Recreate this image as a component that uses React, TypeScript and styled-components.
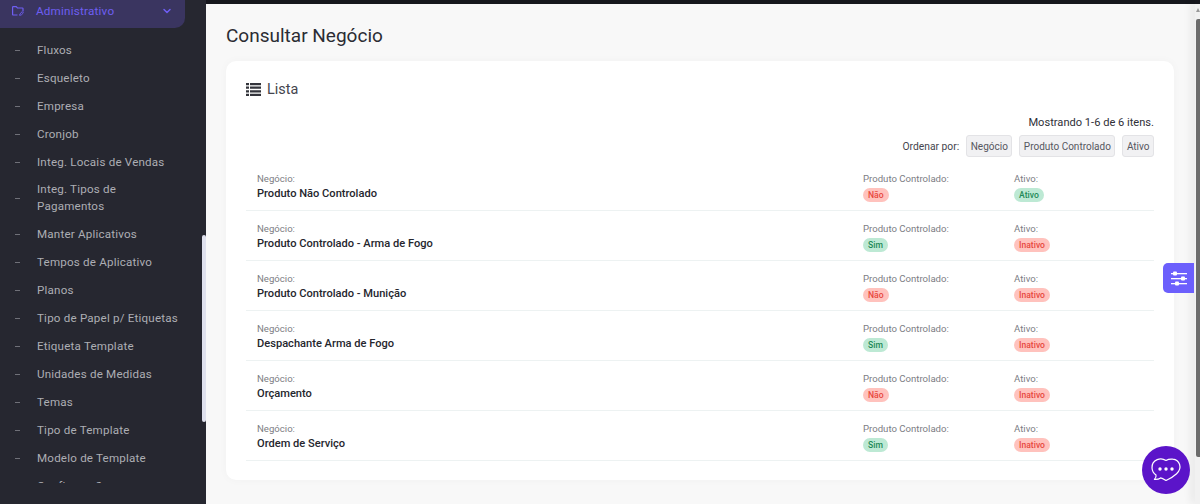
import React from 'react';
import styled, { createGlobalStyle } from 'styled-components';
import { ChevronDown } from 'lucide-react';

const GlobalStyle = createGlobalStyle`
  html, body {
    margin: 0;
    height: 504px;
    overflow: hidden;
    background: #f8f8f8;
    font-family: Roboto, "Liberation Sans", sans-serif;
  }
`;

const Layout = styled.div`
  display: flex;
  width: 1200px;
  height: 504px;
  overflow: hidden;
`;

const Sidebar = styled.aside`
  position: relative;
  flex: none;
  width: 206px;
  height: 504px;
  background: #262730;
`;

const SideClip = styled.div`
  height: 483px;
  overflow: hidden;
`;

const ActiveItem = styled.div`
  display: flex;
  align-items: center;
  width: 185px;
  height: 28px;
  box-sizing: border-box;
  padding: 0 12px 6px 12px;
  border-radius: 0 0 10px 0;
  background: #3a3560;
  color: #6e5ef2;
  font-size: 11.7px;
  letter-spacing: 0.2px;
`;

const ActiveLabel = styled.span`
  flex: 1;
  margin-left: 12px;
`;

const SideList = styled.ul`
  margin: 0;
  padding: 8px 0 0;
  list-style: none;
`;

const SideItem = styled.li`
  display: flex;
  align-items: center;
  box-sizing: border-box;
  min-height: 28px;
  padding: 5px 24px 5px 15px;
  color: #adaeb4;
  font-size: 11.6px;
  line-height: 17px;
  letter-spacing: 0.2px;

  &::before {
    content: '';
    flex: none;
    width: 5px;
    height: 1px;
    margin-right: 17px;
    background: #6f7078;
  }
`;

const SideThumb = styled.div`
  position: absolute;
  top: 235px;
  right: 0;
  width: 4px;
  height: 187px;
  border-radius: 2px;
  background: #dfe1ee;
`;

const Main = styled.main`
  flex: 1;
  min-width: 0;
  display: flex;
  flex-direction: column;
  border-top: 4px solid #16171d;
`;

const Content = styled.div`
  flex: 1;
  padding: 20px 21px 0 20px;
`;

const Title = styled.h1`
  margin: 0 0 13px;
  height: 24px;
  color: #2b2c33;
  font-size: 19px;
  font-weight: 400;
  line-height: 24px;
`;

const Card = styled.section`
  height: 419px;
  box-sizing: border-box;
  padding: 19px 20px 0;
  background: #fff;
  border-radius: 10px;
  box-shadow: 0 0 10px rgba(30, 30, 60, 0.03);
`;

const CardHead = styled.div`
  display: flex;
  align-items: center;
  gap: 6px;
  height: 18px;
  color: #44454d;
  font-size: 14.4px;
`;

const ListIcon = styled.svg`
  width: 15px;
  height: 13px;
  fill: #33343b;
`;

const Summary = styled.div`
  margin-top: 18px;
  text-align: right;
  color: #2f3038;
  font-size: 11.1px;
  line-height: 14px;
`;

const SortBar = styled.div`
  display: flex;
  justify-content: flex-end;
  align-items: center;
  gap: 7px;
  margin-top: 5px;
  color: #44454d;
  font-size: 10.3px;
`;

const SortButton = styled.button`
  height: 22px;
  padding: 0 3.5px;
  background: #f1f1f3;
  border: 1px solid #e3e3e6;
  border-radius: 3px;
  color: #56575f;
  font-family: inherit;
  font-size: 10px;
`;

const Rows = styled.div`
  margin-top: 3.6px;
`;

const Row = styled.div`
  display: grid;
  grid-template-columns: 606px 151px 1fr;
  box-sizing: border-box;
  height: 50px;
  padding: 11px 11px 0;
  border-bottom: 1px solid #edf2f2;
`;

const Field = styled.div`
  display: flex;
  flex-direction: column;
  align-items: flex-start;
`;

const FieldLabel = styled.span`
  color: #7c7d84;
  font-size: 9.6px;
  line-height: 14px;
`;

const FieldValue = styled.strong`
  color: #25262d;
  font-size: 11.1px;
  font-weight: 500;
  line-height: 16px;
`;

const Badge = styled.span<{ $ok: boolean }>`
  margin-top: 2px;
  padding: 0 5px;
  border-radius: 7px;
  background: ${({ $ok }) => ($ok ? '#bde9d4' : '#ffc2bd')};
  color: ${({ $ok }) => ($ok ? '#1f8a57' : '#e8483e')};
  font-size: 8.6px;
  font-weight: 500;
  line-height: 14px;
`;

const PageScroll = styled.div`
  flex: none;
  position: relative;
  width: 5px;
  background: #f1f1f1;
  border-top: 4px solid #16171d;
  box-shadow: -3px 0 9px rgba(0, 0, 0, 0.1);
`;

const ScrollArrow = styled.div`
  position: absolute;
  top: 4px;
  left: 1px;
  width: 0;
  height: 0;
  border-left: 2px solid transparent;
  border-right: 2px solid transparent;
  border-bottom: 4px solid #9a9a9a;
`;

const ScrollThumb = styled.div`
  position: absolute;
  top: 15px;
  left: 1px;
  width: 4px;
  height: 438px;
  border-radius: 2px 0 0 2px;
  background: #6b6b6b;
`;

const FilterTab = styled.button`
  position: absolute;
  top: 263px;
  left: 1163px;
  display: flex;
  align-items: center;
  justify-content: center;
  width: 31px;
  height: 30px;
  padding: 0;
  border: 0;
  border-radius: 5px 0 0 5px;
  background: #6c5ffc;
`;

const ChatBubble = styled.button`
  position: absolute;
  top: 446px;
  left: 1142px;
  display: flex;
  align-items: center;
  justify-content: center;
  width: 48px;
  height: 48px;
  padding: 0;
  border: 0;
  border-radius: 50%;
  background: #5b14c9;
`;

const menu = [
  'Fluxos',
  'Esqueleto',
  'Empresa',
  'Cronjob',
  'Integ. Locais de Vendas',
  'Integ. Tipos de Pagamentos',
  'Manter Aplicativos',
  'Tempos de Aplicativo',
  'Planos',
  'Tipo de Papel p/ Etiquetas',
  'Etiqueta Template',
  'Unidades de Medidas',
  'Temas',
  'Tipo de Template',
  'Modelo de Template',
  'Configurações',
];

const rows = [
  { name: 'Produto Não Controlado', controlled: false, active: true },
  { name: 'Produto Controlado - Arma de Fogo', controlled: true, active: false },
  { name: 'Produto Controlado - Munição', controlled: false, active: false },
  { name: 'Despachante Arma de Fogo', controlled: true, active: false },
  { name: 'Orçamento', controlled: false, active: false },
  { name: 'Ordem de Serviço', controlled: true, active: false },
];

export default function App() {
  return (
    <Layout>
      <GlobalStyle />
      <Sidebar>
        <SideClip>
          <ActiveItem>
            <svg width="12" height="10" viewBox="0 0 12 10" fill="none" stroke="currentColor" strokeWidth="1.2">
              <path d="M5.500 9H1.200a.6.6 0 0 1-.6-.6V1.200a.6.6 0 0 1 .6-.6h3l1.200 1.400h5a.6.6 0 0 1 .6.6v3" />
              <path d="M7.500 9.300 8 7.800l2.200-2.100 1.200 1.200-2.200 2.100Z" strokeWidth="0.9" />
            </svg>
            <ActiveLabel>Administrativo</ActiveLabel>
            <ChevronDown size={12} strokeWidth={3} />
          </ActiveItem>
          <SideList>
            {menu.map((item) => (
              <SideItem key={item}>{item}</SideItem>
            ))}
          </SideList>
        </SideClip>
        <SideThumb />
      </Sidebar>
      <Main>
        <Content>
          <Title>Consultar Negócio</Title>
          <Card>
            <CardHead>
              <ListIcon viewBox="0 0 15 13">
                <path d="M0 0h3v2.200H0zM4 0h11v2.200H4zM0 3.600h3v2.200H0zM4 3.600h11v2.200H4zM0 7.200h3v2.200H0zM4 7.200h11v2.200H4zM0 10.800h3V13H0zM4 10.800h11V13H4z" />
              </ListIcon>
              Lista
            </CardHead>
            <Summary>Mostrando 1-6 de 6 itens.</Summary>
            <SortBar>
              <span>Ordenar por:</span>
              <SortButton>Negócio</SortButton>
              <SortButton>Produto Controlado</SortButton>
              <SortButton>Ativo</SortButton>
            </SortBar>
            <Rows>
              {rows.map((row) => (
                <Row key={row.name}>
                  <Field>
                    <FieldLabel>Negócio:</FieldLabel>
                    <FieldValue>{row.name}</FieldValue>
                  </Field>
                  <Field>
                    <FieldLabel>Produto Controlado:</FieldLabel>
                    <Badge $ok={row.controlled}>{row.controlled ? 'Sim' : 'Não'}</Badge>
                  </Field>
                  <Field>
                    <FieldLabel>Ativo:</FieldLabel>
                    <Badge $ok={row.active}>{row.active ? 'Ativo' : 'Inativo'}</Badge>
                  </Field>
                </Row>
              ))}
            </Rows>
          </Card>
        </Content>
      </Main>
      <PageScroll>
        <ScrollArrow />
        <ScrollThumb />
      </PageScroll>
      <FilterTab aria-label="Configurações">
        <svg width="16" height="15" viewBox="0 0 16 15" fill="#fff">
          <rect x="0" y="2" width="16" height="1.300" />
          <rect x="2" y="0.500" width="4" height="4" rx="1" />
          <rect x="0" y="7" width="16" height="1.300" />
          <rect x="10" y="5.500" width="4" height="4" rx="1" />
          <rect x="0" y="12" width="16" height="1.300" />
          <rect x="4" y="10.500" width="4" height="4" rx="1" />
        </svg>
      </FilterTab>
      <ChatBubble aria-label="Chat">
        <svg width="32" height="30" viewBox="0 0 32 30" fill="none">
          <path
            d="M16 5.500C13.500 3.800 10 3.400 7.200 4.600 3.600 6.100 1.800 9.400 2 13c.2 3 1.700 5.400 4 7 .4 1.500-.2 3-1.600 4.400 2.400.2 4.600-.3 6.200-1.500 1.200.2 2.400.8 5.400 2.600 3.600-1.700 7.600-4 10.600-6.800 2.800-2.600 4-6 3-9.200-1-3-3.600-5-6.800-5.300C20.400 3.900 18 4.300 16 5.500Z"
            stroke="#fff"
            strokeWidth="1.200"
            strokeLinejoin="round"
          />
          <circle cx="10" cy="14" r="1.700" fill="#fff" />
          <circle cx="16" cy="14" r="1.700" fill="#fff" />
          <circle cx="22" cy="14" r="1.700" fill="#fff" />
        </svg>
      </ChatBubble>
    </Layout>
  );
}
